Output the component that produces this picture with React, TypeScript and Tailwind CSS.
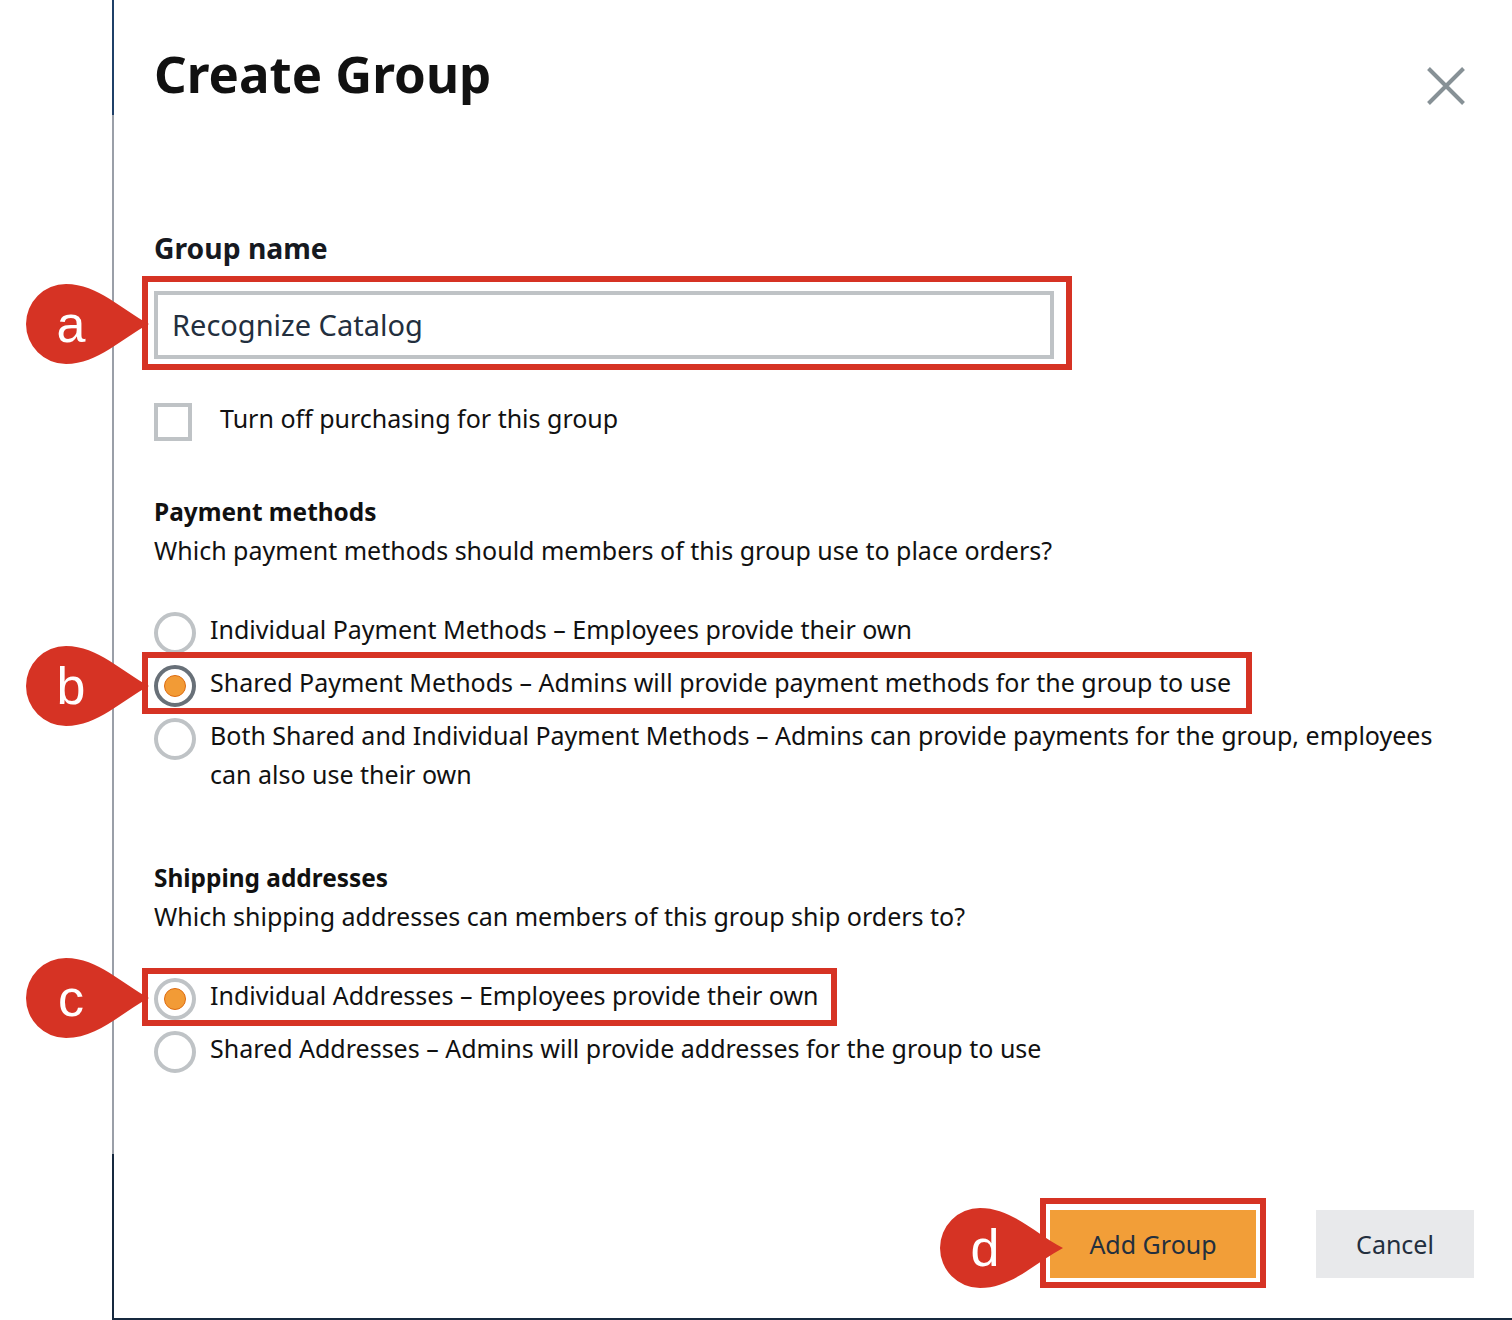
const Callout = ({ letter, className }: { letter: string; className: string }) => (
  <div className={`absolute h-[80px] w-[124px] ${className}`}>
    <svg width="124" height="80" viewBox="0 0 124 80" className="absolute left-0 top-0">
      <path d="M123 40 C 96 54 72 80 40 80 A 40 40 0 0 1 40 0 C 72 0 96 26 123 40 Z" fill="#d63324" />
    </svg>
    <span className="absolute left-0 top-0 flex h-[80px] w-[90px] items-center justify-center text-[52px] leading-none text-white font-['Liberation_Sans',Arial,sans-serif]">
      {letter}
    </span>
  </div>
)

const Radio = ({ checked, dark }: { checked?: boolean; dark?: boolean }) => (
  <span
    className={`flex h-[42px] w-[42px] shrink-0 items-center justify-center rounded-full border-[4px] bg-white ${
      dark ? 'border-[#687078]' : 'border-[#bfc3c6]'
    }`}
  >
    {checked && <span className="h-[22px] w-[22px] rounded-full border border-[#dd6b10] bg-[#f29b36]" />}
  </span>
)

const RadioRow = ({
  checked,
  dark,
  boxClass,
  children,
}: {
  checked?: boolean
  dark?: boolean
  boxClass?: string
  children: React.ReactNode
}) => (
  <div className="relative flex items-start gap-[14px]">
    <Radio checked={checked} dark={dark} />
    <div className="-mt-[2px] text-[25px] leading-[39px] text-[#111]">{children}</div>
    {boxClass && <div className={`pointer-events-none absolute border-[6px] border-[#d63324] ${boxClass}`} />}
  </div>
)

export default function App() {
  return (
    <div className="relative h-[1320px] w-[1512px] overflow-hidden bg-white font-['Noto_Sans',sans-serif]">
      <div className="ml-[112px] flex h-[1320px]">
        {/* panel edge, dark top and bottom, grey where the overlay dims it */}
        <div className="flex w-[2px] shrink-0 flex-col">
          <div className="h-[115px] bg-[#1f4068]" />
          <div className="h-[1039px] bg-[#9a9fa8]" />
          <div className="flex-1 bg-[#16293f]" />
        </div>

        <div className="flex flex-1 flex-col border-b-[2px] border-[#16293f] pl-[40px] pr-[38px]">
          <div className="flex items-start justify-between pt-[37px]">
            <h1 className="text-[51px] font-bold leading-[72px] text-[#111]">Create Group</h1>
            <svg width="38" height="38" viewBox="0 0 38 38" className="mr-[9px] mt-[30px]">
              <path d="M1.5 1.5 L36.5 36.5 M36.5 1.5 L1.5 36.5" stroke="#879196" strokeWidth="4" fill="none" />
            </svg>
          </div>

          <div className="mt-[119px] text-[28.3px] font-bold leading-[40px] text-[#16191f]">Group name</div>
          <div className="relative mt-[23px] h-[68px] w-[900px] border-[4px] border-[#bfc3c6] pl-[14px] text-[29px] leading-[60px] text-[#232f3e]">
            Recognize Catalog
            <div className="pointer-events-none absolute -left-[16px] -right-[22px] -top-[19px] -bottom-[15px] border-[6px] border-[#d63324]" />
          </div>

          <div className="mt-[35px] flex items-start gap-[28px]">
            <span className="mt-[9px] h-[38px] w-[38px] border-[4px] border-[#bfc3c6]" />
            <span className="mt-[5px] text-[25px] leading-[39px] text-[#111]">Turn off purchasing for this group</span>
          </div>

          <div className="mt-[51px] text-[24.4px] font-bold leading-[39px] text-[#111]">Payment methods</div>
          <div className="text-[25px] leading-[39px] text-[#111]">
            Which payment methods should members of this group use to place orders?
          </div>

          <div className="mt-[42px] flex flex-col gap-[11px]">
            <RadioRow>Individual Payment Methods – Employees provide their own</RadioRow>
            <RadioRow checked dark boxClass="-left-[12px] -top-[13px] -bottom-[7px] w-[1110px]">
              Shared Payment Methods – Admins will provide payment methods for the group to use
            </RadioRow>
            <RadioRow>
              Both Shared and Individual Payment Methods – Admins can provide payments for the group, employees
              <br />
              can also use their own
            </RadioRow>
          </div>

          <div className="mt-[64px] text-[24.4px] font-bold leading-[39px] text-[#111]">Shipping addresses</div>
          <div className="text-[25px] leading-[39px] text-[#111]">
            Which shipping addresses can members of this group ship orders to?
          </div>

          <div className="mt-[42px] flex flex-col gap-[11px]">
            <RadioRow checked boxClass="-left-[12px] -top-[10px] -bottom-[6px] w-[695px]">
              Individual Addresses – Employees provide their own
            </RadioRow>
            <RadioRow>Shared Addresses – Admins will provide addresses for the group to use</RadioRow>
          </div>

          <div className="mt-auto mb-[40px] flex justify-end gap-[60px]">
            <div className="relative flex h-[68px] w-[206px] items-center justify-center bg-[#f29e38] pt-[1px] text-[25px] text-[#232f3e]">
              Add Group
              <div className="pointer-events-none absolute -left-[10px] -right-[10px] -top-[12px] -bottom-[10px] border-[6px] border-[#d63324]" />
            </div>
            <div className="flex h-[68px] w-[158px] items-center justify-center bg-[#e8e9eb] pt-[1px] text-[25px] text-[#232f3e]">
              Cancel
            </div>
          </div>
        </div>
      </div>

      <Callout letter="a" className="left-[26px] top-[284px]" />
      <Callout letter="b" className="left-[26px] top-[646px]" />
      <Callout letter="c" className="left-[26px] top-[958px]" />
      <Callout letter="d" className="left-[940px] top-[1208px]" />
    </div>
  )
}
